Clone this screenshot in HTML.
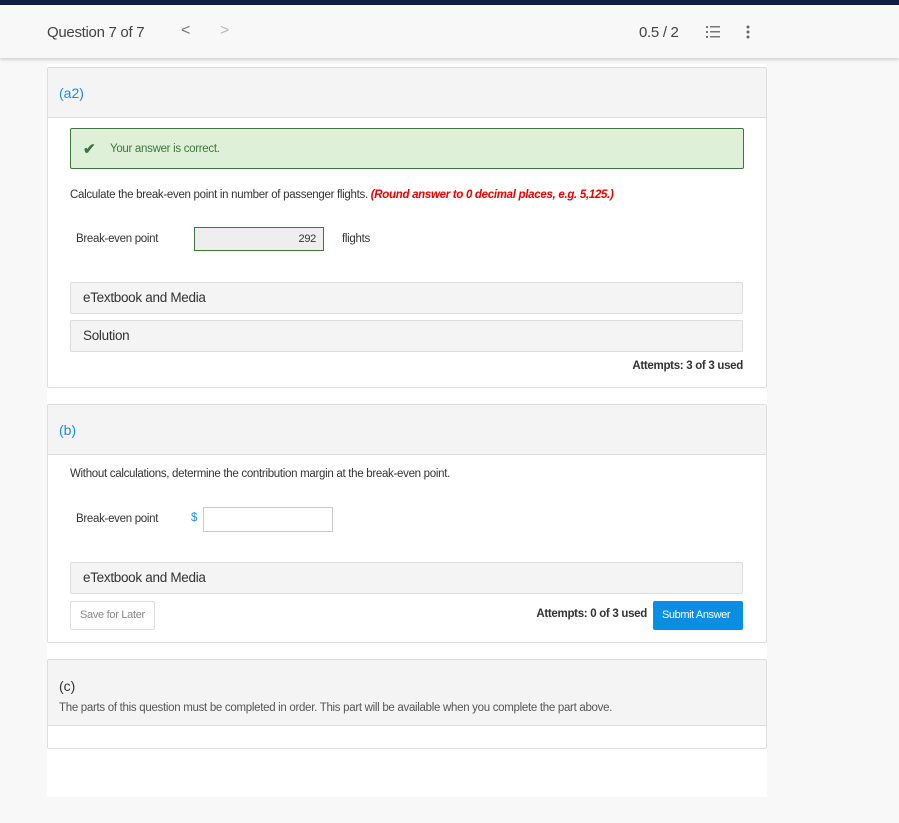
<!DOCTYPE html>
<html><head><style>
*{box-sizing:border-box;margin:0;padding:0}
body{width:899px;height:823px;background:#f8f8f8;font-family:"Liberation Sans",sans-serif;position:relative;overflow:hidden;color:#333}
.a{position:absolute}
.card{position:absolute;left:47px;width:720px;background:#fff;border:1px solid #ddd;border-radius:2px}
.hd{background:#f4f4f4;border-bottom:1px solid #ddd}
.bar{position:absolute;left:22px;width:673px;height:32px;background:#f4f4f4;border:1px solid #ddd;border-radius:2px;font-size:13.5px;color:#333;padding:7px 12px;letter-spacing:-.3px}
.t{font-size:11.5px;letter-spacing:-.3px}
</style></head><body>
<div class="a" style="left:0;top:0;width:899px;height:5px;background:#121d42"></div>
<div class="a" style="left:0;top:5px;width:899px;height:53px;background:#f8f8f8;box-shadow:0 2px 3px rgba(0,0,0,.15)"></div>
<div class="a" style="left:47px;top:24px;font-size:15px;color:#444;letter-spacing:-.3px">Question 7 of 7</div>
<div class="a" style="left:181px;top:22px;font-size:16px;color:#777">&lt;</div>
<div class="a" style="left:220px;top:22px;font-size:16px;color:#bbb">&gt;</div>
<div class="a" style="left:639px;top:24px;font-size:15px;color:#444;letter-spacing:-.3px">0.5 / 2</div>
<svg class="a" style="left:706px;top:26px" width="14" height="12"><g fill="#777"><rect x="0" y="0" width="2" height="2"/><rect x="4" y="0" width="10" height="1.5"/><rect x="0" y="5" width="2" height="2"/><rect x="4" y="5" width="10" height="1.5"/><rect x="0" y="10" width="2" height="2"/><rect x="4" y="10" width="10" height="1.5"/></g></svg>
<svg class="a" style="left:746px;top:25px" width="4" height="14"><g fill="#666"><circle cx="2" cy="2" r="1.5"/><circle cx="2" cy="7" r="1.5"/><circle cx="2" cy="12" r="1.5"/></g></svg>

<div class="a" style="left:47px;top:64px;width:720px;height:733px;background:#fff"></div>

<div class="card" style="top:67px;height:321px">
 <div class="hd" style="height:50px;padding:17px 11px;color:#1a8ee0;font-size:14px">(a2)</div>
 <div class="a" style="left:22px;top:60px;width:674px;height:41px;background:#dff0d8;border:1px solid #3c763d;border-radius:2px"></div>
 <div class="a" style="left:35px;top:72px;color:#3c763d;font-size:15px;font-weight:bold">✔</div>
 <div class="a t" style="left:62px;top:75px;color:#3c763d">Your answer is correct.</div>
 <div class="a t" style="left:22px;top:121px;color:#333">Calculate the break-even point in number of passenger flights. <i style="color:#e00;font-weight:bold">(Round answer to 0 decimal places, e.g. 5,125.)</i></div>
 <div class="a t" style="left:28px;top:165px">Break-even point</div>
 <div class="a t" style="left:146px;top:159px;width:130px;height:24px;background:#eee;border:1px solid #3c763d;text-align:right;padding:5px 7px;font-size:11px">292</div>
 <div class="a t" style="left:294px;top:165px">flights</div>
 <div class="bar" style="top:214px">eTextbook and Media</div>
 <div class="bar" style="top:252px">Solution</div>
 <div class="a t" style="right:23px;top:292px;color:#333;font-weight:bold">Attempts: 3 of 3 used</div>
</div>

<div class="card" style="top:404px;height:239px">
 <div class="hd" style="height:50px;padding:17px 11px;color:#1a8ee0;font-size:14px">(b)</div>
 <div class="a t" style="left:22px;top:63px">Without calculations, determine the contribution margin at the break-even point.</div>
 <div class="a t" style="left:28px;top:108px">Break-even point</div>
 <div class="a t" style="left:143px;top:107px;color:#1a8ee0">$</div>
 <div class="a" style="left:155px;top:102px;width:130px;height:25px;border:1px solid #ccc;background:#fff"></div>
 <div class="bar" style="top:157px">eTextbook and Media</div>
 <div class="a" style="left:22px;top:196px;width:85px;height:29px;border:1px solid #ddd;border-radius:2px;font-size:11px;color:#888;padding:7px 9px;letter-spacing:-.3px">Save for Later</div>
 <div class="a t" style="right:119px;top:203px;font-weight:bold">Attempts: 0 of 3 used</div>
 <div class="a" style="left:605px;top:196px;width:90px;height:29px;background:#0a8ee3;border-radius:2px;color:#fff;font-size:11px;padding:8px 9px;letter-spacing:-.4px">Submit Answer</div>
</div>

<div class="card" style="top:659px;height:90px">
 <div class="hd" style="height:66px;padding:18px 11px">
  <div style="font-size:14px;color:#333">(c)</div>
  <div class="t" style="color:#555;margin-top:8px">The parts of this question must be completed in order. This part will be available when you complete the part above.</div>
 </div>
</div>
</body></html>
